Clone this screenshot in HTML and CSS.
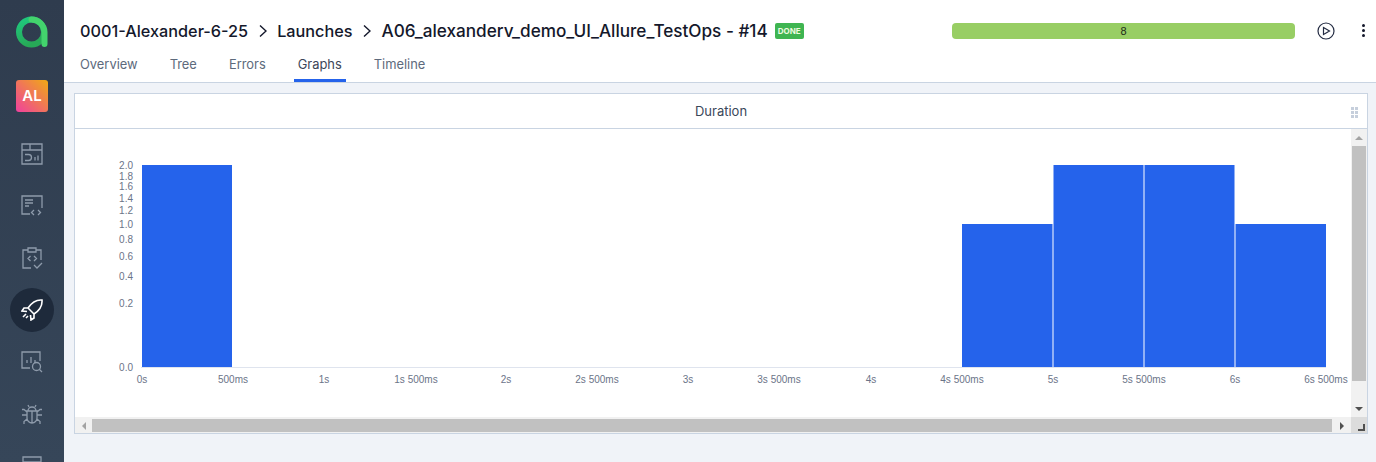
FILE: index.html
```html
<!DOCTYPE html>
<html lang="en">
<head>
<meta charset="UTF-8">
<title>Launch graphs</title>
<link rel="stylesheet" href="styles.css">
</head>
<body>
<aside class="sidebar">
  <div class="logo">
    <svg width="32" height="32" viewBox="0 0 32 32">
      <defs>
        <linearGradient id="logoGrad" x1="0" y1="0" x2="0.4" y2="1">
          <stop offset="0" stop-color="#1fc97e"/>
          <stop offset="1" stop-color="#27a957"/>
        </linearGradient>
      </defs>
      <circle cx="15.500" cy="16" r="12.500" fill="none" stroke="url(#logoGrad)" stroke-width="6"/>
      <path d="M15.500 3.500A13 13 0 0 1 28.500 16V28" fill="none" stroke="#43d36d" stroke-width="6" stroke-linecap="round"/>
    </svg>
  </div>
  <div class="project-badge">AL</div>
  <nav class="side-nav">
    <a class="side-item">
      <svg width="22" height="22" viewBox="0 0 22 22"><path d="M1 1h20v20H1zM1 7h20M9 1v6M4 11.500h3.500a3 3 0 0 1 0 6H4M14 17.500v-3.500M17 17.500v-5"/></svg>
    </a>
    <a class="side-item">
      <svg width="22" height="22" viewBox="0 0 22 22"><path d="M9 19H1V1h20v12M4 5h8M4 8h8M4 11h4M13 15l-2.500 2.500L13 20M17 15l2.500 2.500L17 20"/></svg>
    </a>
    <a class="side-item">
      <svg width="22" height="22" viewBox="0 0 22 22"><path d="M7 3H2v18h8M15 3h5v10M7 1h8v4H7zM9.500 9L7 11.500 9.500 14M13 9l2.500 2.500L13 14M13 18l3 3 5-5"/></svg>
    </a>
    <a class="side-item active">
      <svg width="22" height="22" viewBox="0 0 22 22"><path d="M21 1c-6-.5-10 2-14 8l6 6c6-4 8.500-8 8-14zM7 9H3L1 12l5 .5M13 15v4l-3 2-.5-5M5 15l-3 3M7 17l-2 2"/></svg>
    </a>
    <a class="side-item">
      <svg width="22" height="22" viewBox="0 0 22 22"><path d="M9 17H1V1h18v9M6 12V9M10 12V6M14 12V9"/><circle cx="15.500" cy="15.500" r="4"/><path d="M18.500 18.500L21 21"/></svg>
    </a>
    <a class="side-item">
      <svg width="22" height="22" viewBox="0 0 22 22"><path d="M6 8h10v7a5 5 0 0 1-10 0zM7 8a4 4 0 0 1 8 0M11 8v12M8 4L7 2M14 4l1-2M6 12H1M16 12h5M6 9L3 6.500H1M16 9l3-2.500h2M6 16l-3 2.500V21M16 16l3 2.500V21"/></svg>
    </a>
    <a class="side-item">
      <svg width="22" height="22" viewBox="0 0 22 22"><path d="M2 2h18v18H2zM2 7h18"/></svg>
    </a>
  </nav>
</aside>

<main class="main">
  <header class="topbar">
    <div class="topbar-row">
      <div class="crumbs">
        <span class="crumb">0001-Alexander-6-25</span>
        <svg class="crumb-arrow" width="8" height="12" viewBox="0 0 8 12"><path d="M1 .5L7 6l-6 5.500"/></svg>
        <span class="crumb">Launches</span>
        <svg class="crumb-arrow" width="8" height="12" viewBox="0 0 8 12"><path d="M1 .5L7 6l-6 5.500"/></svg>
        <span class="crumb-long">A06_alexanderv_demo_UI_Allure_TestOps - #14</span>
        <span class="status">DONE</span>
      </div>
      <div class="progress">8</div>
      <svg class="run-icon" width="18" height="18" viewBox="0 0 18 18"><circle cx="9" cy="9" r="8"/><path d="M6.500 5.500L12.500 9l-6 3.500z"/></svg>
      <div class="more"><i></i><i></i><i></i></div>
    </div>
    <div class="tabs">
      <a class="tab">Overview</a>
      <a class="tab">Tree</a>
      <a class="tab">Errors</a>
      <a class="tab current">Graphs</a>
      <a class="tab">Timeline</a>
    </div>
  </header>

  <section class="card">
    <div class="card-title">
      Duration
      <div class="grip"><i></i><i></i><i></i><i></i><i></i><i></i></div>
    </div>
    <div class="card-body">
      <div class="chart-view">
        <svg class="chart" width="1276" height="288" viewBox="75 129 1276 288">
          <g class="bars">
            <rect x="142" y="165" width="90" height="202"/>
            <rect x="962" y="224" width="90.500" height="143"/>
            <rect x="1053.500" y="165" width="90" height="202"/>
            <rect x="1144.500" y="165" width="90" height="202"/>
            <rect x="1235.500" y="224" width="90.500" height="143"/>
          </g>
          <path class="axis" d="M141 367.500H1326"/>
          <g class="y-labels">
            <text x="133" y="169">2.0</text>
            <text x="133" y="180">1.8</text>
            <text x="133" y="190">1.6</text>
            <text x="133" y="202">1.4</text>
            <text x="133" y="214">1.2</text>
            <text x="133" y="228">1.0</text>
            <text x="133" y="243">0.8</text>
            <text x="133" y="260">0.6</text>
            <text x="133" y="280">0.4</text>
            <text x="133" y="307">0.2</text>
            <text x="133" y="371">0.0</text>
          </g>
          <g class="x-labels">
            <text x="142" y="383">0s</text>
            <text x="233" y="383">500ms</text>
            <text x="324" y="383">1s</text>
            <text x="416" y="383">1s 500ms</text>
            <text x="506" y="383">2s</text>
            <text x="597" y="383">2s 500ms</text>
            <text x="688" y="383">3s</text>
            <text x="779" y="383">3s 500ms</text>
            <text x="871" y="383">4s</text>
            <text x="962" y="383">4s 500ms</text>
            <text x="1053" y="383">5s</text>
            <text x="1144" y="383">5s 500ms</text>
            <text x="1235" y="383">6s</text>
            <text x="1326" y="383">6s 500ms</text>
          </g>
        </svg>
      </div>
      <div class="scroll-y">
        <span class="arrow up"></span>
        <div class="track-y"><div class="thumb-y"></div></div>
        <span class="arrow down"></span>
      </div>
      <div class="scroll-x">
        <span class="arrow left"></span>
        <div class="track-x"></div>
        <span class="arrow right"></span>
      </div>
      <div class="scroll-corner">
        <svg width="7" height="7" viewBox="0 0 7 7"><path d="M0 5h5V0h2v7H0z"/></svg>
      </div>
    </div>
  </section>
</main>
</body>
</html>
```

FILE: styles.css
```css
body {
  margin: 0;
  height: 462px;
  overflow: hidden;
  display: flex;
  background-color: #f0f3f8;
  font-family: "Inter", "Noto Sans", sans-serif;
  color: #14182b;
}

/* sidebar */
.sidebar {
  width: 64px;
  flex-shrink: 0;
  display: flex;
  flex-direction: column;
  align-items: center;
  padding-top: 16px;
  background: linear-gradient(#2f3c4e, #364659);
  overflow: hidden;
}
.logo {
  width: 32px;
  height: 32px;
}
.logo svg {
  display: block;
  overflow: visible;
}
.project-badge {
  width: 32px;
  height: 32px;
  margin-top: 32px;
  border-radius: 3px;
  background: linear-gradient(to top right, #f0409f, #f0aa14);
  color: #fff;
  font-size: 15px;
  font-weight: 600;
  line-height: 32px;
  text-align: center;
}
.side-nav {
  margin-top: 20px;
  display: flex;
  flex-direction: column;
  flex-shrink: 0;
}
.side-item {
  width: 44px;
  height: 44px;
  margin-bottom: 8px;
  display: flex;
  align-items: center;
  justify-content: center;
  border-radius: 50%;
}
.side-item svg {
  fill: none;
  stroke: #8e9bab;
  stroke-width: 1.3;
}
.side-item.active {
  background-color: #1e2a3b;
}
.side-item.active svg {
  stroke: #fff;
  stroke-width: 1.6;
}

/* header */
.main {
  flex: 1;
  min-width: 0;
  display: flex;
  flex-direction: column;
}
.topbar {
  height: 82px;
  background-color: #fff;
  border-bottom: 1px solid #c9d4e2;
  display: flex;
  flex-direction: column;
}
.topbar-row {
  height: 47px;
  padding: 14px 11px 0 16px;
  box-sizing: border-box;
  display: flex;
  align-items: center;
}
.crumbs {
  flex: 1;
  display: flex;
  align-items: center;
  font-weight: 500;
  white-space: nowrap;
}
.crumb {
  font-size: 16.25px;
}
.crumb-long {
  font-size: 17.15px;
}
.crumb-arrow {
  margin: 0 10.5px;
  fill: none;
  stroke: #14182b;
  stroke-width: 1.4;
}
.status {
  margin-left: 7px;
  padding: 0 3px;
  height: 16px;
  border-radius: 2px;
  background-color: #3fb551;
  color: #f0fbe0;
  font-size: 8px;
  font-weight: 700;
  line-height: 16px;
}
.progress {
  width: 343px;
  height: 16px;
  border-radius: 4px;
  background-color: #98ce64;
  color: #1c2a18;
  font-family: "Liberation Sans", sans-serif;
  font-size: 11px;
  line-height: 16px;
  text-align: center;
}
.run-icon {
  margin-left: 22px;
  fill: none;
  stroke: #232b42;
  stroke-width: 1.2;
}
.more {
  width: 3px;
  margin-left: 27px;
  display: flex;
  flex-direction: column;
  gap: 2px;
}
.more i {
  width: 3px;
  height: 3px;
  border-radius: 50%;
  background-color: #14182b;
}
.tabs {
  flex: 1;
  display: flex;
  gap: 24px;
  padding-left: 12px;
}
.tab {
  padding: 1px 4px 0;
  font-size: 12.9px;
  line-height: 34px;
  color: #5d6a7c;
}
.tab.current {
  color: #3c4658;
  border-bottom: 3px solid #2563eb;
  height: 31px;
}

/* card */
.card {
  margin: 10px 8px 0 10px;
  height: 339px;
  background-color: #fff;
  border: 1px solid #c9d4e2;
  display: flex;
  flex-direction: column;
}
.card-title {
  position: relative;
  height: 34px;
  flex-shrink: 0;
  border-bottom: 1px solid #c9d4e2;
  font-size: 13px;
  line-height: 35px;
  text-align: center;
  color: #3a475a;
}
.grip {
  position: absolute;
  top: 13px;
  right: 9px;
  width: 7px;
  display: grid;
  grid-template-columns: 3px 3px;
  gap: 1px;
}
.grip i {
  height: 3px;
  background-color: #c6cfdc;
}
.card-body {
  flex: 1;
  display: grid;
  grid-template-columns: 1fr 16px;
  grid-template-rows: 288px 16px;
}
.chart-view {
  overflow: hidden;
}
.chart {
  display: block;
}
.bars rect {
  fill: #2563eb;
}
.axis {
  stroke: #dfe4ee;
  stroke-width: 1;
}
.y-labels text,
.x-labels text {
  font-family: "Liberation Sans", sans-serif;
  font-size: 10px;
  fill: #6b7488;
}
.y-labels text {
  text-anchor: end;
}
.x-labels text {
  text-anchor: middle;
}

/* scrollbars */
.scroll-y {
  background-color: #f1f1f1;
  display: flex;
  flex-direction: column;
  align-items: center;
}
.track-y {
  flex: 1;
  width: 100%;
  padding: 0 1px;
  box-sizing: border-box;
}
.thumb-y {
  height: 235px;
  background-color: #c1c1c1;
}
.scroll-x {
  background-color: #f1f1f1;
  display: flex;
  align-items: center;
  padding-top: 1px;
  box-sizing: border-box;
}
.track-x {
  flex: 1;
  height: 13px;
  background-color: #c1c1c1;
}
.arrow {
  width: 17px;
  height: 17px;
  flex-shrink: 0;
  display: flex;
  align-items: center;
  justify-content: center;
}
.arrow.right {
  width: 19px;
}
.arrow::before {
  content: "";
  border: 4px solid transparent;
}
.arrow.up::before {
  border-top-width: 0;
  border-bottom: 4px solid #a3a3a3;
}
.arrow.down::before {
  border-bottom-width: 0;
  border-top: 4px solid #505050;
}
.arrow.left::before {
  border-left-width: 0;
  border-right: 4px solid #a3a3a3;
}
.arrow.right::before {
  border-right-width: 0;
  border-left: 4px solid #505050;
}
.scroll-corner {
  background-color: #dcdcdc;
  display: flex;
  align-items: flex-end;
  justify-content: flex-end;
  padding: 0 2px 2px 0;
}
.scroll-corner svg {
  fill: #505050;
}
```
